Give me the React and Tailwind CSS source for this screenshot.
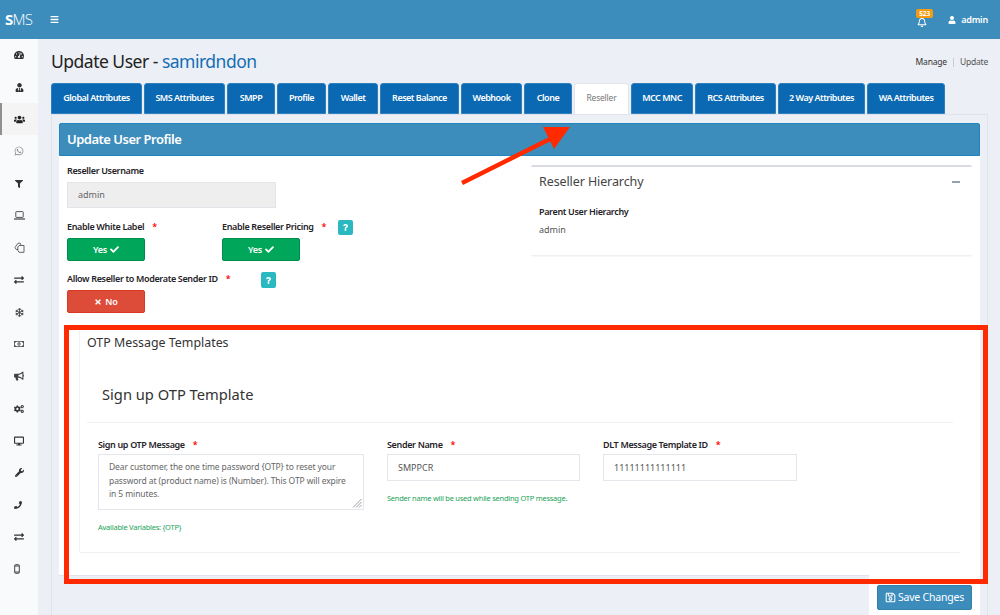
import {
  FaTachometerAlt, FaUserTie, FaUsers, FaWhatsapp, FaFilter, FaExchangeAlt,
  FaRegSnowflake, FaRegMoneyBillAlt, FaBullhorn, FaCogs, FaDesktop, FaWrench, FaPhoneAlt,
  FaBars, FaRegBell, FaUser, FaCheck, FaTimes, FaQuestion, FaRegSave,
} from 'react-icons/fa';

function LaptopIcon() {
  return (
    <svg width="11" height="9" viewBox="0 0 11 9" fill="none" stroke="currentColor" strokeWidth="0.9">
      <rect x="1.8" y="0.6" width="7.4" height="5.8" rx="0.6" />
      <path d="M0 8h11" strokeWidth="1.2" />
    </svg>
  );
}

function CloneIcon() {
  return (
    <svg width="11" height="11" viewBox="0 0 11 11" fill="none" stroke="currentColor" strokeWidth="0.9">
      <path d="M4 7.5H2.2L1 5.5 4 1.2h2.2L7 3" />
      <path d="M5 3.5h5v6.8H5L3.8 8.4V5z" />
    </svg>
  );
}

function MobileIcon() {
  return (
    <svg width="6" height="10" viewBox="0 0 6 10" fill="none" stroke="currentColor" strokeWidth="1">
      <rect x="0.7" y="0.7" width="4.6" height="8.6" rx="0.9" />
      <path d="M0.7 2h4.6M0.7 8h4.6" strokeWidth="1.2" />
    </svg>
  );
}

const sideItems = [
  [FaTachometerAlt, 'text-[10px] text-[#333]'],
  [FaUserTie, 'text-[9px] text-[#333]'],
  [FaUsers, 'text-[11px] text-[#222]'],
  [FaWhatsapp, 'text-[10px] text-[#888]'],
  [FaFilter, 'text-[8px] text-[#333]'],
  [LaptopIcon, 'text-[#444]'],
  [CloneIcon, 'text-[#555]'],
  [FaExchangeAlt, 'text-[10px] text-[#333]'],
  [FaRegSnowflake, 'text-[9px] text-[#444]'],
  [FaRegMoneyBillAlt, 'text-[10px] text-[#444]'],
  [FaBullhorn, 'text-[10px] text-[#444]'],
  [FaCogs, 'text-[10px] text-[#333]'],
  [FaDesktop, 'text-[10px] text-[#333]'],
  [FaWrench, 'text-[9px] text-[#333]'],
  [FaPhoneAlt, 'text-[8px] text-[#333] scale-x-[-1] pl-[2px]'],
  [FaExchangeAlt, 'text-[10px] text-[#333]'],
  [MobileIcon, 'text-[#444] mr-[5px]'],
];

const tabs = [
  ['Global Attributes', 'w-[91px]'],
  ['SMS Attributes', 'w-[81px]'],
  ['SMPP', 'w-[48px]'],
  ['Profile', 'w-[49px]'],
  ['Wallet', 'w-[50px]'],
  ['Reset Balance', 'w-[79px]'],
  ['Webhook', 'w-[61px]'],
  ['Clone', 'w-[48px]'],
  ['Reseller', 'w-[55px]'],
  ['MCC MNC', 'w-[62px]'],
  ['RCS Attributes', 'w-[81px]'],
  ['2 Way Attributes', 'w-[87px]'],
  ['WA Attributes', 'w-[78px]'],
];

const otpText = 'Dear customer, the one time password {OTP} to reset your password at (product name) is (Number). This OTP will expire in 5 minutes.';

function Label({ children, className = '' }) {
  return (
    <div className={`text-[9px] leading-[12px] font-semibold tracking-[-0.35px] text-[#1f2328] ${className}`}>
      {children}
    </div>
  );
}

function Req() {
  return <span className="ml-[6px] text-[9px] text-[#f00]">*</span>;
}

function Help({ className = '' }) {
  return (
    <span className={`flex h-[15px] w-[15px] items-center justify-center rounded-[2px] bg-[#2bb9c1] text-white ${className}`}>
      <FaQuestion className="text-[7px]" />
    </span>
  );
}

function YesBtn() {
  return (
    <div className="flex h-[23px] w-[78px] items-center justify-center gap-[3px] rounded-[2px] border border-[#008d4c] bg-[#00a65a] text-[9px] font-semibold tracking-[-0.2px] text-white">
      Yes <FaCheck className="text-[9px]" />
    </div>
  );
}

export default function App() {
  return (
    <div className="relative h-[615px] w-[1000px] overflow-hidden bg-[#eceff5] font-['Noto_Sans',sans-serif]">
      {/* Top bar */}
      <header className="flex h-[39px] items-center bg-[#3d8dbc] text-white">
        <div className="w-[50px] pl-[5px] font-['Open_Sans',sans-serif] text-[15px] tracking-[-0.7px]">
          <span className="font-bold">S</span>
          <span className="font-light">MS</span>
        </div>
        <FaBars className="text-[9px]" />
        <div className="ml-auto flex items-center pr-[12px]">
          <div className="relative mr-[21px] mt-[4px]">
            <FaRegBell className="text-[10px]" />
            <span className="absolute -top-[8px] -left-[1px] rounded-[2px] bg-[#f39c12] px-[3px] text-[6.5px] font-bold leading-[9px]">523</span>
          </div>
          <FaUser className="mr-[5px] text-[8px]" />
          <span className="text-[9px] font-semibold leading-none tracking-[-0.2px]">admin</span>
        </div>
      </header>

      <div className="flex h-[576px]">
        {/* Sidebar */}
        <aside className="w-[38px] shrink-0 bg-[#f9fafc]">
          {sideItems.map(([Icon, cls], i) => (
            <div
              key={i}
              className={`flex h-[32.15px] items-center justify-center ${
                i === 2 ? 'border-l-2 border-[#8f8f8f] bg-[#f4f4f5] pr-[2px]' : ''
              }`}
            >
              <span className={`flex ${cls}`}><Icon /></span>
            </div>
          ))}
        </aside>

        {/* Main */}
        <main className="min-w-0 flex-1 pl-[13px] pr-[12px]">
          <div className="flex h-[44px] items-center justify-between pt-[1px]">
            <h1 className="text-[17.5px] font-normal leading-none tracking-[-0.5px] text-[#222]">
              Update User - <span className="text-[#146eb4]">samirdndon</span>
            </h1>
            <div className="mt-[2px] flex items-center text-[8.5px] tracking-[-0.2px] text-[#333]">
              <span>Manage</span>
              <span className="mx-[6px] h-[9px] w-px bg-[#ccc]" />
              <span className="text-[#555]">Update</span>
            </div>
          </div>

          {/* Tabs */}
          <div className="flex gap-[2px]">
            {tabs.map(([name, w]) =>
              name === 'Reseller' ? (
                <div key={name} className={`flex h-[31px] ${w} items-center justify-center rounded-t-[3px] border border-b-0 border-[#e3e5ea] bg-white pb-[1px] text-[8.5px] tracking-[-0.2px] text-[#777]`}>
                  {name}
                </div>
              ) : (
                <div key={name} className={`flex h-[31px] ${w} items-center justify-center rounded-t-[3px] border border-[#2d7fbd] bg-[#0a69b2] pb-[1px] text-[9px] font-semibold tracking-[-0.5px] text-white`}>
                  {name}
                </div>
              )
            )}
          </div>

          {/* Tab content */}
          <div className="h-[510px] border border-[#e0e3ea] pl-[7px] pr-[7px] pt-[8px]">
            <div className="flex h-[33px] items-center rounded-t-[2px] border border-[#1f87bf] bg-[#3d8dbc] pl-[7px] text-[13px] font-semibold tracking-[-0.5px] text-white">
              Update User Profile
            </div>

            <div className="h-[419px] bg-white pl-[8px] pr-[8px] pt-[9px]">
              <div className="flex">
                {/* Left form */}
                <div className="w-[464px] shrink-0">
                  <Label>Reseller Username</Label>
                  <div className="mt-[5px] flex h-[26px] w-[209px] items-center border border-[#e2e4e9] bg-[#eeeeee] pl-[10px] text-[9px] text-[#666]">
                    admin
                  </div>

                  <div className="mt-[13px] flex">
                    <div className="w-[155px]">
                      <Label>Enable White Label <Req /></Label>
                      <div className="mt-[5px]"><YesBtn /></div>
                    </div>
                    <div className="w-[116px]">
                      <Label>Enable Reseller Pricing <Req /></Label>
                      <div className="mt-[5px]"><YesBtn /></div>
                    </div>
                    <Help className="-mt-[1px]" />
                  </div>

                  <div className="mt-[7px] flex">
                    <div className="w-[194px]">
                      <div className="pt-[5px]">
                        <Label>Allow Reseller to Moderate Sender ID <Req /></Label>
                      </div>
                      <div className="mt-[5px] flex h-[23px] w-[78px] items-center justify-center gap-[3px] rounded-[2px] border border-[#d73925] bg-[#dd4b39] text-[9px] font-semibold text-white">
                        <FaTimes className="text-[8px]" /> No
                      </div>
                    </div>
                    <Help className="mt-[4px] h-[16px]" />
                  </div>
                </div>

                {/* Hierarchy card */}
                <div className="h-[91px] w-[441px] shrink-0 rounded-[2px] border-t-2 border-b border-[#d8dbe2] border-b-[#eeeff2] pl-[8px] pr-[12px] shadow-[0_1px_1px_rgba(0,0,0,0.03)]">
                  <div className="flex h-[30px] items-center justify-between">
                    <span className="text-[12.5px] tracking-[-0.1px] text-[#444]">Reseller Hierarchy</span>
                    <span className="h-[1.5px] w-[8px] bg-[#97a0b3]" />
                  </div>
                  <Label className="mt-[9px]">Parent User Hierarchy</Label>
                  <div className="mt-[6px] text-[9px] leading-[12px] text-[#555]">admin</div>
                </div>
              </div>

              {/* OTP templates */}
              <div className="ml-[12px] mr-[11px] mt-[11px] h-[229px] rounded-[2px] border-b border-l border-[#f1f2f5] pl-[7px] pr-[8px]">
                <div className="pt-[10px] text-[12.4px] leading-[18px] text-[#333]">OTP Message Templates</div>
                <div className="flex h-[71px] items-center border-b border-[#eff0f3] pb-[3px] pl-[15px] pt-[17px] text-[14.7px] text-[#333]">
                  Sign up OTP Template
                </div>

                <div className="flex pl-[11px] pt-[16px]">
                  <div className="w-[289px]">
                    <Label>Sign up OTP Message <Req /></Label>
                    <div className="relative mt-[3px] h-[56px] w-[266px] border border-[#e4e6ec] pl-[10px] pr-[12px] pt-[5px] text-[8.5px] leading-[13.5px] tracking-[-0.1px] text-[#666]">
                      {otpText}
                      <svg className="absolute bottom-px right-px" width="10" height="10" viewBox="0 0 10 10" stroke="#888" strokeWidth="0.8">
                        <path d="M1 9.5 9.5 1M4 9.5 9.5 4M7 9.5 9.5 7" />
                      </svg>
                    </div>
                    <div className="mt-[11px] text-[7.5px] leading-[12px] tracking-[-0.25px] text-[#1aa358]">Available Variables: {'{OTP}'}</div>
                  </div>
                  <div className="w-[216px]">
                    <Label>Sender Name <Req /></Label>
                    <div className="mt-[3px] flex h-[27px] w-[193px] items-center border border-[#e4e6ec] pl-[10px] text-[9px] text-[#555]">
                      SMPPCR
                    </div>
                    <div className="mt-[11px] text-[7.5px] leading-[12px] tracking-[-0.25px] text-[#1aa358]">Sender name will be used while sending OTP message.</div>
                  </div>
                  <div className="w-[194px]">
                    <Label>DLT Message Template ID <Req /></Label>
                    <div className="mt-[3px] flex h-[27px] items-center border border-[#e4e6ec] pl-[10px] text-[9px] text-[#555]">
                      11111111111111
                    </div>
                  </div>
                </div>
              </div>
            </div>

            {/* Save */}
            <div className="flex">
              <div className="h-px flex-1 bg-[#dfe2e9]" />
              <div className="h-[40px] w-[111px] bg-white pl-[8px] pt-[10px]">
                <div className="flex h-[25px] w-[95px] items-center justify-center gap-[2px] rounded-[2px] border border-[#367fa9] bg-[#3d8dbc] text-[10.5px] tracking-[-0.2px] text-white">
                  <FaRegSave className="text-[11px]" /> Save Changes
                </div>
              </div>
            </div>
          </div>
        </main>
      </div>

      {/* Annotations drawn on the screenshot */}
      <div className="pointer-events-none absolute left-[64px] top-[325px] h-[259px] w-[924px] border-[5px] border-[#ff2a00]" />
      <svg className="pointer-events-none absolute left-[455px] top-[120px]" width="125" height="70" viewBox="0 0 125 70">
        <path d="M7 63 97 18" stroke="#ff2a00" strokeWidth="4.5" fill="none" />
        <path d="M88 7 H115 L99 29 Z" fill="#ff2a00" />
      </svg>
    </div>
  );
}
